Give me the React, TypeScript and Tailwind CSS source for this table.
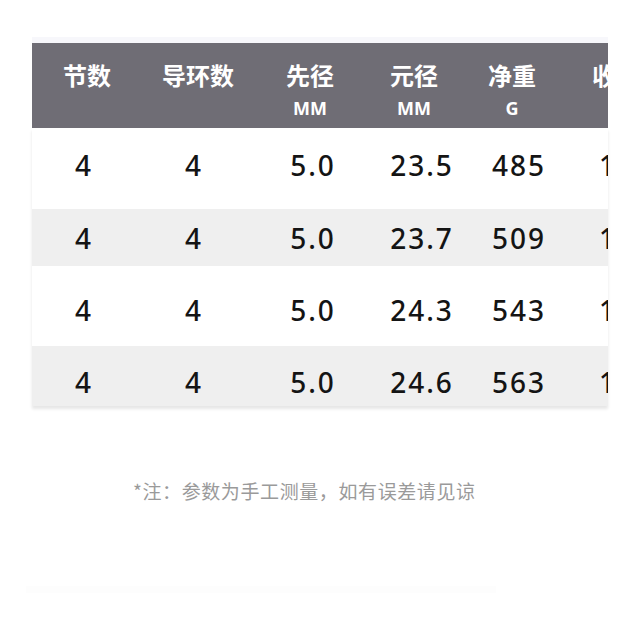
import React from "react";

const cjk = { fontFamily: '"Noto Sans CJK SC", "Noto Sans", sans-serif' };
const num = { fontFamily: '"Noto Sans", "Noto Sans CJK SC", sans-serif' };

interface Row {
  cells: string[];
  bg: string;
  h: string;
  pt: string;
}

const rows: Row[] = [
  { cells: ["4", "4", "5.0", "23.5", "485", "112"], bg: "bg-white", h: "h-[81px]", pt: "pt-[19px]" },
  { cells: ["4", "4", "5.0", "23.7", "509", "112"], bg: "bg-[#efefef]", h: "h-[57px]", pt: "pt-[11px]" },
  { cells: ["4", "4", "5.0", "24.3", "543", "112"], bg: "bg-white", h: "h-[80px]", pt: "pt-[26px]" },
  { cells: ["4", "4", "5.0", "24.6", "563", "112"], bg: "bg-[#efefef]", h: "h-[60px]", pt: "pt-[18px]" },
];

// column widths, header text centred in each
const cols = ["w-[110px]", "w-[112px]", "w-[112px]", "w-[96px]", "w-[100px]", "w-[90px]"];
// data cells sit slightly off the header centres
const dataShift = ["mr-[6px]", "mr-[8px]", "ml-[6px]", "ml-[16px]", "ml-[14px]", "ml-[0px]"];

const headers = [
  { title: "节数", unit: "" },
  { title: "导环数", unit: "" },
  { title: "先径", unit: "MM" },
  { title: "元径", unit: "MM" },
  { title: "净重", unit: "G" },
  { title: "收缩", unit: "" },
];

export default function App() {
  return (
    <div className="w-[640px] h-[640px] bg-white pt-[37px] overflow-hidden">
      <div className="mx-[32px] w-[576px]">
        <div className="h-[6px] bg-[#f7f7fb]" />

        {/* Header */}
        <div className="h-[85px] bg-[#6f6d75] flex overflow-hidden">
          {headers.map((h, i) => (
            <div
              key={i}
              className={`${cols[i]} shrink-0 flex flex-col items-center text-white ${i === 5 ? "items-start pl-[30px]" : ""}`}
            >
              <div className="mt-[16px] h-[32px] leading-[32px] text-[24px] font-bold" style={cjk}>
                {h.title}
              </div>
              {h.unit && (
                <div className="mt-[6px] leading-[22px] text-[18px] font-bold" style={num}>
                  {h.unit}
                </div>
              )}
            </div>
          ))}
        </div>

        {/* Body */}
        <div className="shadow-[0_3px_3px_rgba(0,0,0,0.10)]">
          {rows.map((r, ri) => (
            <div key={ri} className={`${r.bg} ${r.h} ${r.pt} flex overflow-hidden`}>
              {r.cells.map((c, ci) => (
                <div
                  key={ci}
                  className={`${cols[ci]} shrink-0 flex ${ci === 5 ? "justify-start pl-[37px]" : "justify-center"}`}
                >
                  <span
                    className={`${dataShift[ci]} text-[28px] leading-[36px] font-medium text-[#141414] tracking-[2px]`}
                    style={num}
                  >
                    {c}
                  </span>
                </div>
              ))}
            </div>
          ))}
        </div>
      </div>

      <div
        className="mt-[72px] pl-[133px] text-[19px] leading-[26px] tracking-[0.6px] text-[#9a9a9a]"
        style={cjk}
      >
        *注：参数为手工测量，如有误差请见谅
      </div>

      <div className="mt-[82px] ml-[26px] w-[470px] h-[7px] bg-[#fdfdfd]" />
    </div>
  );
}
